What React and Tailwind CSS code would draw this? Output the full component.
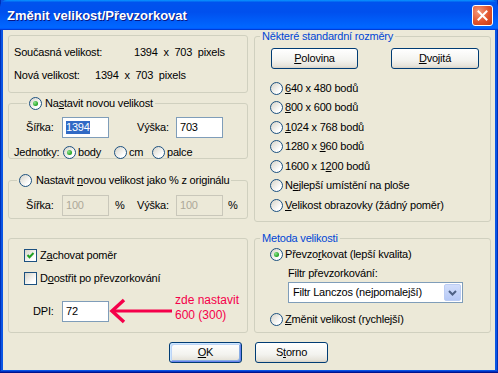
import React from "react";

function Radio({ checked }) {
  return (
    <span className="flex h-[13px] w-[13px] shrink-0 items-center justify-center rounded-full border border-[#1c5180] bg-[linear-gradient(135deg,#d6d3c8,#ffffff_75%)]">
      {checked && (
        <span className="h-[5px] w-[5px] rounded-full bg-[radial-gradient(circle_at_35%_35%,#8ee58e,#21a121_70%)]" />
      )}
    </span>
  );
}

function Check({ checked }) {
  return (
    <span className="flex h-[13px] w-[13px] shrink-0 items-center justify-center border border-[#1c5180] bg-[linear-gradient(135deg,#d6d3c8,#ffffff_75%)]">
      {checked && (
        <svg width="9" height="9" viewBox="0 0 9 9">
          <path d="M1.5 4 L3.5 6.2 L7.5 2" stroke="#21a121" strokeWidth="2" fill="none" />
        </svg>
      )}
    </span>
  );
}

function Btn({ className, focus, children }) {
  return (
    <div
      className={
        "flex h-[21px] items-center justify-center rounded-[3px] border border-[#003c74] bg-[linear-gradient(180deg,#ffffff,#f3f3ef_60%,#e6e3da_90%,#d6d0c5)] " +
        (focus ? "shadow-[inset_1px_1px_#cee7ff,inset_-1px_-1px_#6982ee,inset_2px_2px_#bcd4f6,inset_-2px_-2px_#89ade4] " : "") +
        className
      }
    >
      {children}
    </div>
  );
}

function Edit({ className, disabled, children }) {
  return (
    <div
      className={
        "flex h-[21px] w-[47px] items-center border px-[3px] " +
        (disabled ? "border-[#c9c7ba] bg-[#ece9d8] text-[#aca899] " : "border-[#7f9db9] bg-white ") +
        (className || "")
      }
    >
      {children}
    </div>
  );
}

function RadioRow({ checked, children }) {
  return (
    <div className="flex h-[13px] items-center gap-[2px]">
      <Radio checked={checked} />
      <span>{children}</span>
    </div>
  );
}

export default function App() {
  return (
    <div className="flex h-[373px] w-[498px] flex-col bg-[#0a55e4] font-['Liberation_Sans',Arial,sans-serif] text-[11px] leading-[13px] tracking-[-0.2px] text-black shadow-[inset_0_-1px_#00138c,inset_0_-2px_#0030c0,inset_1px_0_#0030b8,inset_-1px_0_#0030b8]">
      <div className="flex h-[30px] shrink-0 items-center justify-between rounded-t-[7px] bg-[linear-gradient(180deg,#0997ff_0%,#0053ee_8%,#0050ee_40%,#0066ff_88%,#0066ff_93%,#005bff_95%,#003dd7_96%,#003dd7_100%)] pl-[7px] pr-[5px]">
        <span className="text-[13px] font-bold tracking-normal text-white [text-shadow:1px_1px_#0a1883]">
          Změnit velikost/Převzorkovat
        </span>
        <div className="flex h-[21px] w-[21px] items-center justify-center rounded-[3px] border border-white bg-[radial-gradient(circle_at_30%_30%,#f39a7c,#e2532c_55%,#c33a16)]">
          <svg width="11" height="11" viewBox="0 0 11 11">
            <path d="M1.5 1.5 L9.5 9.5 M9.5 1.5 L1.5 9.5" stroke="#fff" strokeWidth="2" strokeLinecap="square" />
          </svg>
        </div>
      </div>

      <div className="mx-[3px] mb-[3px] flex flex-1 flex-col bg-[#ece9d8]">
        <div className="flex gap-[6px] pl-[5px]">
          {/* left column */}
          <div className="flex w-[240px] flex-col">
            <div className="mt-[5px] flex h-[58px] flex-col gap-[10px] rounded-[3px] border border-[#d0d0bf] pl-[5px] pt-[10px]">
              <div className="flex">
                <span className="w-[120px]">Současná velikost:</span>
                <span className="whitespace-pre">1394  x  703  pixels</span>
              </div>
              <div className="flex">
                <span className="w-[81px]">Nová velikost:</span>
                <span className="whitespace-pre">1394  x  703  pixels</span>
              </div>
            </div>

            <fieldset className="mt-[4px] h-[62px] rounded-[3px] border border-[#d0d0bf]">
              <legend className="ml-[18px] px-[2px]">
                <span className="flex items-center gap-[3px]">
                  <Radio checked />
                  <span>
                    Na<span className="underline">s</span>tavit novou velikost
                  </span>
                </span>
              </legend>
              <div className="flex flex-col pl-[5px] pt-[7px]">
                <div className="flex items-center pl-[12px]">
                  <span className="w-[36px]">Šířka:</span>
                  <Edit>
                    <span className="bg-[#316ac5] text-white">1394</span>
                  </Edit>
                  <span className="ml-[28px] w-[39px]">Výška:</span>
                  <Edit>703</Edit>
                </div>
                <div className="mt-[8px] flex h-[13px] items-center">
                  <span className="w-[49px]">Jednotky:</span>
                  <div className="flex w-[51px] items-center gap-[2px]">
                    <Radio checked />
                    <span>body</span>
                  </div>
                  <div className="flex w-[38px] items-center gap-[2px]">
                    <Radio />
                    <span>cm</span>
                  </div>
                  <div className="flex items-center gap-[2px]">
                    <Radio />
                    <span>palce</span>
                  </div>
                </div>
              </div>
            </fieldset>

            <fieldset className="mt-[15px] h-[45px] rounded-[3px] border border-[#d0d0bf]">
              <legend className="ml-[8px] px-[2px]">
                <span className="flex items-center gap-[4px]">
                  <Radio />
                  <span>
                    Nastavit <span className="underline">n</span>ovou velikost jako % z originálu
                  </span>
                </span>
              </legend>
              <div className="flex items-center pl-[17px] pt-[8px]">
                <span className="w-[36px]">Šířka:</span>
                <Edit disabled>100</Edit>
                <span className="w-[28px] pl-[6px]">%</span>
                <span className="w-[39px]">Výška:</span>
                <Edit disabled>100</Edit>
                <span className="pl-[5px]">%</span>
              </div>
            </fieldset>

            <div className="mt-[19px] flex h-[95px] flex-col rounded-[3px] border border-[#d0d0bf] pl-[15px] pt-[10px]">
              <div className="flex h-[13px] items-center gap-[3px]">
                <Check checked />
                <span>
                  Z<span className="underline">a</span>chovat poměr
                </span>
              </div>
              <div className="mt-[10px] flex h-[13px] items-center gap-[3px]">
                <Check />
                <span>
                  D<span className="underline">o</span>ostřit po převzorkování
                </span>
              </div>
              <div className="mt-[13px] flex items-center pl-[9px]">
                <span className="w-[29px]">DPI:</span>
                <Edit>72</Edit>
                <svg width="63" height="26" viewBox="0 0 63 26" className="shrink-0">
                  <path d="M4 13 H63" stroke="#f5004a" strokeWidth="3" />
                  <path d="M15 2 L3 13 L15 24" stroke="#f5004a" strokeWidth="3.5" fill="none" strokeLinejoin="miter" />
                </svg>
                <div className="-mt-[7px] ml-[3px] flex flex-col text-[12px] leading-[15px] tracking-normal text-[#f5004a]">
                  <span>zde nastavit</span>
                  <span>600 (300)</span>
                </div>
              </div>
            </div>
          </div>

          {/* right column */}
          <div className="flex w-[237px] flex-col">
            <fieldset className="h-[192px] rounded-[3px] border border-[#d0d0bf]">
              <legend className="ml-[5px] px-[2px] text-[#0046d5]">Některé standardní rozměry</legend>
              <div className="flex flex-col pl-[15px] pt-[5px]">
                <div className="ml-[1px] flex">
                  <Btn className="w-[87px]">
                    <span>
                      <span className="underline">P</span>olovina
                    </span>
                  </Btn>
                  <Btn className="ml-[33px] w-[88px]">
                    <span>
                      <span className="underline">D</span>vojitá
                    </span>
                  </Btn>
                </div>
                <div className="mt-[12.5px] flex flex-col gap-[6.5px]">
                  <RadioRow>
                    <span className="underline">6</span>40 x 480 bodů
                  </RadioRow>
                  <RadioRow>
                    <span className="underline">8</span>00 x 600 bodů
                  </RadioRow>
                  <RadioRow>
                    <span className="underline">1</span>024 x 768 bodů
                  </RadioRow>
                  <RadioRow>
                    1280 x <span className="underline">9</span>60 bodů
                  </RadioRow>
                  <RadioRow>
                    1600 x 1<span className="underline">2</span>00 bodů
                  </RadioRow>
                  <RadioRow>
                    N<span className="underline">e</span>jlepší umístění na ploše
                  </RadioRow>
                  <RadioRow>
                    <span className="underline">V</span>elikost obrazovky (žádný poměr)
                  </RadioRow>
                </div>
              </div>
            </fieldset>

            <fieldset className="mt-[10px] h-[101px] rounded-[3px] border border-[#d0d0bf]">
              <legend className="ml-[5px] px-[2px] text-[#0046d5]">Metoda velikosti</legend>
              <div className="flex flex-col pl-[15px] pt-[3px]">
                <RadioRow checked>
                  Převzo<span className="underline">r</span>kovat (lepší kvalita)
                </RadioRow>
                <span className="ml-[18px] mt-[6px]">Filtr převzorkování:</span>
                <div className="ml-[18px] mt-[2px] flex h-[21px] w-[175px] items-center justify-between border border-[#7f9db9] bg-white pl-[4px] pr-[1px]">
                  <span>Filtr Lanczos (nejpomalejší)</span>
                  <div className="flex h-[17px] w-[17px] items-center justify-center rounded-[2px] border border-[#bccdf4] bg-[linear-gradient(180deg,#d2defb,#b6c9f6)]">
                    <svg width="9" height="6" viewBox="0 0 9 6">
                      <path d="M1 1 L4.5 4.5 L8 1" stroke="#4d6185" strokeWidth="2" fill="none" />
                    </svg>
                  </div>
                </div>
                <div className="mt-[9.5px]">
                  <RadioRow>
                    <span className="underline">Z</span>měnit velikost (rychlejší)
                  </RadioRow>
                </div>
              </div>
            </fieldset>
          </div>
        </div>

        <div className="mt-[9px] flex justify-center gap-[13px] pr-[1px]">
          <Btn focus className="w-[73px]">
            <span>
              <span className="underline">O</span>K
            </span>
          </Btn>
          <Btn className="w-[73px]">
            <span>
              S<span className="underline">t</span>orno
            </span>
          </Btn>
        </div>
      </div>
    </div>
  );
}
